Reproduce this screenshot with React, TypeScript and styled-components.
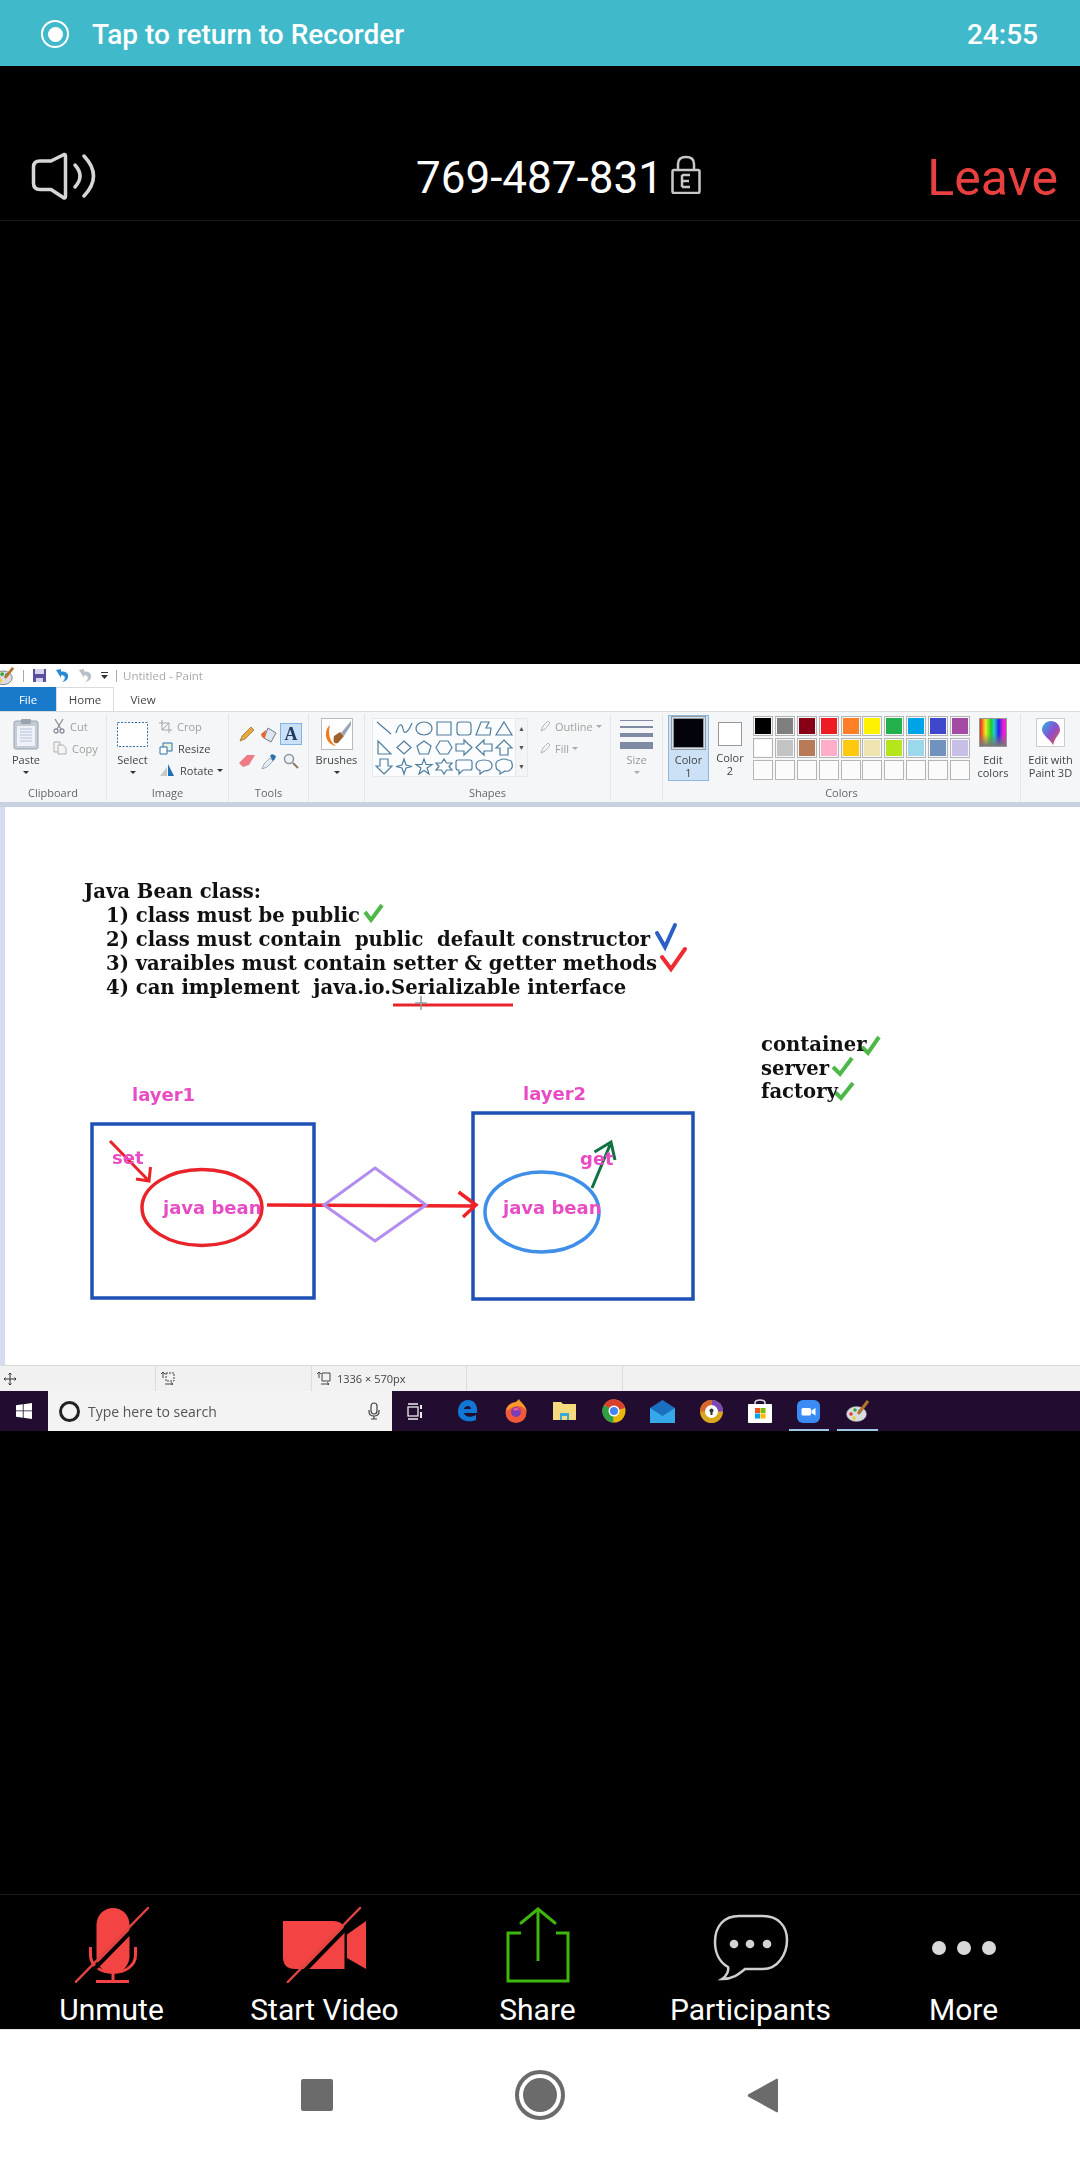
import React from "react";
import styled, { createGlobalStyle } from "styled-components";

const GlobalStyle = createGlobalStyle`
  html, body { margin: 0; padding: 0; background: #000; }
  body { font-family: Roboto, "Liberation Sans", sans-serif; }
  * { box-sizing: border-box; }
`;

const Page = styled.div`
  width: 1080px;
  height: 2160px;
  display: flex;
  flex-direction: column;
  background: #000;
  overflow: hidden;
`;

/* recorder strip */
const RecorderBar = styled.div`
  height: 66px;
  flex: none;
  display: flex;
  align-items: center;
  padding: 2px 42px 0 41px;
  background: #40b9cb;
  color: #fff;
  font-size: 28px;
  font-weight: 500;
`;

const RecDot = styled.span`
  width: 28px;
  height: 28px;
  border: 2px solid #fff;
  border-radius: 50%;
  display: flex;
  align-items: center;
  justify-content: center;
  margin-right: 23px;
  &::after {
    content: "";
    width: 15px;
    height: 15px;
    border-radius: 50%;
    background: #fff;
  }
`;

const RecTime = styled.span`
  margin-left: auto;
`;

/* meeting header */
const Header = styled.div`
  height: 155px;
  flex: none;
  display: flex;
  align-items: center;
  padding: 69px 22px 0 31px;
  border-bottom: 1px solid #1c1c1c;
`;

const SpeakerSvg = styled.svg`
  margin-bottom: 3px;
`;

const MeetingId = styled.div`
  margin-left: 319px;
  display: flex;
  align-items: center;
  color: #fff;
  font-size: 44px;
  font-weight: 400;
  gap: 8px;
`;

const LockSvg = styled.svg`
  margin-bottom: 6px;
`;

const Leave = styled.div`
  margin-left: auto;
  color: #e8403f;
  font-size: 50px;
  font-weight: 400;
`;

const BlackGap = styled.div<{ $h: number }>`
  height: ${(p) => p.$h}px;
  flex: none;
`;

/* shared screen */
const Share = styled.div`
  height: 767px;
  flex: none;
  display: flex;
  flex-direction: column;
  background: #fff;
  filter: blur(0.45px);
  font-family: "Open Sans", "Noto Sans", sans-serif;
  color: #444;
  font-size: 11px;
`;

const TitleBar = styled.div`
  height: 23px;
  flex: none;
  display: flex;
  align-items: center;
  gap: 8px;
  margin-left: -7px;
  color: #a8a8a8;
  font-size: 11.5px;
`;

const TitleSep = styled.span`
  width: 1px;
  height: 12px;
  background: #aaa;
`;

const TitleText = styled.span`
  margin-left: -2px;
`;

const Tabs = styled.div`
  height: 25px;
  flex: none;
  display: flex;
  align-items: stretch;
  border-bottom: 1px solid #dadbdc;
`;

const Tab = styled.div<{ $kind?: "file" | "active" }>`
  width: ${(p) => (p.$kind === "file" ? 56 : 58)}px;
  display: flex;
  align-items: center;
  justify-content: center;
  background: ${(p) => (p.$kind === "file" ? "#1979ca" : "#fff")};
  color: ${(p) => (p.$kind === "file" ? "#fff" : "#444")};
  border: ${(p) => (p.$kind === "active" ? "1px solid #dadbdc" : "none")};
  border-bottom: none;
  font-size: 11.5px;
`;

const Ribbon = styled.div`
  height: 90px;
  flex: none;
  display: flex;
  background: #f5f6f7;
`;

const Group = styled.div<{ $w: number; $last?: boolean }>`
  width: ${(p) => p.$w}px;
  flex: none;
  display: flex;
  flex-direction: column;
  border-right: ${(p) => (p.$last ? "none" : "1px solid #e4e5e7")};
  margin: 2px 0 1px;
`;

const GroupBody = styled.div<{ $pad?: number }>`
  flex: 1;
  display: flex;
  padding-left: ${(p) => p.$pad ?? 0}px;
  min-height: 0;
`;

const GroupLabel = styled.div`
  height: 16px;
  line-height: 16px;
  text-align: center;
  font-size: 11px;
  color: #666;
`;

const LargeTool = styled.div<{ $w?: number; $muted?: boolean }>`
  width: ${(p) => (p.$w ? `${p.$w}px` : "auto")};
  display: flex;
  flex-direction: column;
  align-items: center;
  padding-top: 4px;
  font-size: 11px;
  line-height: 13px;
  color: ${(p) => (p.$muted ? "#999" : "#444")};
`;

const LargeIcon = styled.div`
  height: 32px;
  margin-bottom: 3px;
  display: flex;
  align-items: center;
  justify-content: center;
`;

const Caret = styled.span<{ $muted?: boolean; $inline?: boolean }>`
  width: 0;
  height: 0;
  margin-top: ${(p) => (p.$inline ? 0 : 5)}px;
  margin-left: ${(p) => (p.$inline ? -2 : 0)}px;
  border-left: 3px solid transparent;
  border-right: 3px solid transparent;
  border-top: 3px solid ${(p) => (p.$muted ? "#aaa" : "#333")};
`;

const SmallColumn = styled.div<{ $left?: number }>`
  margin-left: ${(p) => p.$left ?? 0}px;
  padding-top: 1px;
  display: flex;
  flex-direction: column;
`;

const SmallTool = styled.div<{ $muted?: boolean }>`
  height: 22px;
  display: flex;
  align-items: center;
  gap: 5px;
  color: ${(p) => (p.$muted ? "#a0a0a0" : "#444")};
  font-size: 11px;
`;

const ToolsGrid = styled.div`
  display: grid;
  grid-template-columns: repeat(3, 22px);
  grid-template-rows: 22px 22px;
  row-gap: 5px;
  padding-top: 9px;
  justify-items: center;
  align-items: center;
`;

const ToolCell = styled.div<{ $on?: boolean }>`
  width: 22px;
  height: 22px;
  display: flex;
  align-items: center;
  justify-content: center;
  background: ${(p) => (p.$on ? "#c9e0f7" : "transparent")};
  border: ${(p) => (p.$on ? "1px solid #7fb2e5" : "none")};
  color: #1f3a5f;
  font-family: "Liberation Serif", serif;
  font-weight: 700;
  font-size: 18px;
`;

const BrushBox = styled.div`
  width: 32px;
  height: 32px;
  border: 1px solid #bbb;
  background: #fff;
`;

const ShapePanel = styled.div`
  margin-top: 4px;
  width: 156px;
  height: 59px;
  display: flex;
  background: #fbfcfe;
  border: 1px solid #e6e8ec;
`;

const ShapeGrid = styled.div`
  width: 142px;
  padding-left: 1px;
  display: grid;
  grid-template-columns: repeat(7, 20px);
  grid-template-rows: repeat(3, 19px);
`;

const ShapeScroll = styled.div`
  flex: 1;
  display: flex;
  flex-direction: column;
  align-items: center;
  justify-content: space-around;
  border-left: 1px solid #e6e8ec;
  background: #f3f4f6;
  color: #555;
  font-size: 7px;
  line-height: 1;
`;

const SizeLines = styled.div`
  width: 33px;
  display: flex;
  flex-direction: column;
  gap: 5px;
`;

const SizeLine = styled.span<{ $h: number }>`
  height: ${(p) => p.$h}px;
  background: #7f8ba3;
`;

const Color1Box = styled.div`
  width: 41px;
  height: 66px;
  margin-top: 1px;
  display: flex;
  flex-direction: column;
  align-items: center;
  padding-top: 2px;
  background: #cde1f6;
  border: 1px solid #8fb6dd;
  font-size: 11px;
  line-height: 13px;
  text-align: center;
`;

const Swatch = styled.span<{ $c: string; $w: number; $h: number }>`
  width: ${(p) => p.$w}px;
  height: ${(p) => p.$h}px;
  background: ${(p) => p.$c};
  border: 1px solid #999;
  outline: 1px solid ${(p) => (p.$c === "#fff" ? "transparent" : "#999")};
  outline-offset: 1px;
  margin-bottom: 5px;
`;

const Color2Tool = styled.div`
  width: 40px;
  margin-left: 1px;
  padding-top: 8px;
  display: flex;
  flex-direction: column;
  align-items: center;
  font-size: 11px;
  line-height: 13px;
  text-align: center;
`;

const Palette = styled.div`
  margin-left: 3px;
  margin-top: 2px;
  width: 218px;
  display: grid;
  grid-template-columns: repeat(10, 20px);
  grid-template-rows: repeat(3, 20px);
  gap: 2px 1.9px;
`;

const PaletteCell = styled.span<{ $c?: string }>`
  border: 1px solid #b5b5b5;
  background: ${(p) => (p.$c ? `linear-gradient(${p.$c}, ${p.$c}) center/16px 16px no-repeat` : "#fbfbfb")};
`;

const CenterTool = styled.div<{ $left?: number; $w: number }>`
  margin-left: ${(p) => p.$left ?? 0}px;
  width: ${(p) => p.$w}px;
  padding-top: 4px;
  display: flex;
  flex-direction: column;
  align-items: center;
  text-align: center;
  font-size: 11px;
  line-height: 13px;
  white-space: nowrap;
`;

const RainbowBox = styled.div`
  width: 28px;
  height: 29px;
  margin-bottom: 6px;
  border: 1px solid #999;
  background:
    linear-gradient(rgba(255, 255, 255, 0) 55%, #777),
    linear-gradient(90deg, #e22, #ee2 22%, #2c2 42%, #2cc 55%, #22e 72%, #e2c 90%);
`;

const Paint3dBox = styled.div`
  width: 29px;
  height: 29px;
  margin-bottom: 6px;
  border: 1px solid #ccc;
  background: #fff;
  display: flex;
  align-items: center;
  justify-content: center;
`;

const RibbonEdge = styled.div`
  height: 5px;
  flex: none;
  background: #c9d0e0;
`;

/* drawing area */
const CanvasWrap = styled.div`
  height: 558px;
  flex: none;
  border-left: 5px solid #d5dcef;
  background: #fff;
  position: relative;
`;

const CanvasDrawing = styled.svg`
  position: absolute;
  left: -5px;
  top: 0;
  width: 1080px;
  height: 558px;
`;

const Notes = styled.div<{ $x: number; $y: number; $lh: number }>`
  position: absolute;
  left: ${(p) => p.$x - 5}px;
  top: ${(p) => p.$y - 807}px;
  font-family: "DejaVu Serif", "Liberation Serif", serif;
  font-weight: 700;
  font-size: 19.6px;
  line-height: ${(p) => p.$lh}px;
  color: #111;
  white-space: pre;
`;

const NoteItem = styled.div`
  padding-left: 22px;
`;

const PinkLabel = styled.span<{ $x: number; $y: number }>`
  position: absolute;
  left: ${(p) => p.$x - 5}px;
  top: ${(p) => p.$y - 807}px;
  font-family: "DejaVu Sans", sans-serif;
  font-weight: 700;
  font-size: 18px;
  line-height: 20px;
  color: #e84cc4;
`;

const PaintStatus = styled.div`
  height: 26px;
  flex: none;
  display: flex;
  align-items: center;
  background: #f1f1f2;
  border-top: 1px solid #d8d8d8;
  font-size: 11px;
  color: #444;
`;

const StatusCell = styled.div<{ $w: number; $pad: number }>`
  width: ${(p) => p.$w}px;
  height: 100%;
  padding-left: ${(p) => p.$pad}px;
  display: flex;
  align-items: center;
  gap: 6px;
  border-right: 1px solid #dcdcdc;
`;

const Taskbar = styled.div`
  height: 40px;
  flex: none;
  display: flex;
  align-items: center;
  background: #220c30;
`;

const StartButton = styled.div`
  width: 48px;
  display: flex;
  justify-content: center;
`;

const SearchBox = styled.div`
  width: 344px;
  height: 100%;
  padding: 0 11px;
  display: flex;
  align-items: center;
  background: #f3f3f3;
  color: #555;
  font-size: 14px;
`;

const SearchRing = styled.span`
  width: 21px;
  height: 21px;
  border: 3px solid #222;
  border-radius: 50%;
  margin-right: 8px;
`;

const SearchMic = styled.span`
  margin-left: auto;
  margin-right: 1px;
  display: flex;
`;

const TaskIcons = styled.div`
  display: flex;
  height: 100%;
  margin-left: -1px;
`;

const TaskIcon = styled.div<{ $open?: boolean }>`
  width: 48.8px;
  height: 100%;
  display: flex;
  align-items: center;
  justify-content: center;
  position: relative;
  &::after {
    content: "";
    display: ${(p) => (p.$open ? "block" : "none")};
    position: absolute;
    left: 4px;
    right: 4px;
    bottom: 0;
    height: 2px;
    background: #9fc7e8;
  }
`;

const TaskViewCell = styled(TaskIcon)`
  width: 52px;
  padding-right: 4px;
`;

/* bottom controls */
const Toolbar = styled.div`
  height: 135px;
  flex: none;
  display: flex;
  padding: 12px 10px 0 5px;
  border-top: 1px solid #1c1c1c;
`;

const Control = styled.div`
  width: 213px;
  display: flex;
  flex-direction: column;
  align-items: center;
  color: #fff;
  font-size: 30px;
  line-height: 34px;
`;

const ControlIcon = styled.div`
  height: 76px;
  margin-bottom: 10px;
  display: flex;
  align-items: center;
  justify-content: center;
`;

const NavBar = styled.div`
  flex: 1;
  display: flex;
  align-items: center;
  justify-content: center;
  gap: 182px;
  padding-right: 1px;
  background: #fff;
  border-top: 1px solid #e8e8e8;
`;

const NavSquare = styled.span`
  width: 32px;
  height: 32px;
  border-radius: 2px;
  background: #6b6b6b;
`;

const NavCircle = styled.span`
  width: 50px;
  height: 50px;
  border-radius: 50%;
  border: 4px solid #6b6b6b;
  padding: 4px;
  &::after {
    content: "";
    display: block;
    width: 100%;
    height: 100%;
    border-radius: 50%;
    background: #6b6b6b;
  }
`;

const shapePaths = [
  "M3 3L17 15",
  "M2 14C5 4 8 4 9 10S14 14 18 4",
  "M10 3C15 3 18 6 18 9.500S15 16 10 16S2 13 2 9.500S5 3 10 3Z",
  "M3 3H17V16H3Z",
  "M6 3H14Q17 3 17 6V13Q17 16 14 16H6Q3 16 3 13V6Q3 3 6 3Z",
  "M2 16L7 3H15L12 9H17L16 16Z",
  "M10 3L18 16H2Z",
  "M4 3V16H17Z",
  "M10 3L17 9.500L10 16L3 9.500Z",
  "M10 3L17 8L14.500 16H5.500L3 8Z",
  "M6 3H14L18 9.500L14 16H6L2 9.500Z",
  "M2 6H10V2L18 9.500L10 17V13H2Z",
  "M18 6H10V2L2 9.500L10 17V13H18Z",
  "M10 2L18 10H14V17H6V10H2Z",
  "M10 17L18 9H14V2H6V9H2Z",
  "M10 2L12 8L18 9.500L12 11L10 17L8 11L2 9.500L8 8Z",
  "M10 2L12 7.500H18L13 11L15 17L10 13.500L5 17L7 11L2 7.500H8Z",
  "M10 2L12.500 6H18L15 9.500L18 13H12.500L10 17L7.500 13H2L5 9.500L2 6H7.500Z",
  "M4 3H16Q18 3 18 5V11Q18 13 16 13H9L5 17V13H4Q2 13 2 11V5Q2 3 4 3Z",
  "M10 3C15 3 18 5 18 8.500S15 14 10 14L6 17V13.500C3 12.500 2 10.500 2 8.500C2 5 5 3 10 3Z",
  "M6 3Q10 1 14 3Q18 3 18 7Q19 10 17 12Q15 15 11 14L6 17V14Q2 13 2 9Q1 4 6 3Z",
];

const topColors = ["#000", "#7f7f7f", "#880015", "#ed1c24", "#ff7f27", "#fff200", "#22b14c", "#00a2e8", "#3f48cc", "#a349a4"];
const midColors = ["#fff", "#c3c3c3", "#b97a57", "#ffaec9", "#ffc90e", "#efe4b0", "#b5e61d", "#99d9ea", "#7092be", "#c8bfe7"];

const PaintLogo = () => (
  <svg width="22" height="20" viewBox="0 0 24 22">
    <ellipse cx="11" cy="13" rx="10" ry="7.500" fill="#ddd" stroke="#777" />
    <circle cx="6" cy="12" r="2" fill="#e33" />
    <circle cx="10" cy="9" r="2" fill="#3a3" />
    <circle cx="15" cy="10" r="2" fill="#27c" />
    <circle cx="8" cy="16" r="2" fill="#ec3" />
    <path d="M13 13L22 2" stroke="#b5732c" strokeWidth="3" />
  </svg>
);

const SaveIcon = () => (
  <svg width="15" height="15" viewBox="0 0 15 15">
    <path d="M1 1H14V14H1Z" fill="#5c4f9c" />
    <path d="M3 1H12V6H3Z" fill="#d8d4ec" />
    <path d="M4 10H11V14H4Z" fill="#d8d4ec" />
  </svg>
);

const UndoIcon = ({ c }: { c: string }) => (
  <svg width="15" height="15" viewBox="0 0 15 15">
    <path d="M1 2L6 1V3.500C11 3 14 5.500 13 9.500C12.500 12 10 13.500 7 14C10 12 10.500 9.500 9 8C8 7 7 7 6 7.500V10Z" fill={c} />
  </svg>
);

const QuickCaret = () => (
  <svg width="7" height="8" viewBox="0 0 7 8" fill="#333">
    <path d="M0 0H7V1H0ZM0 3H7L3.500 7Z" />
  </svg>
);

const ClipboardIcon = () => (
  <svg width="26" height="32" viewBox="0 0 26 32">
    <rect x="1" y="3" width="24" height="28" rx="2" fill="#c5ccd6" stroke="#9aa3af" />
    <rect x="4" y="8" width="18" height="20" fill="#eef2f8" />
    <path d="M7 11H19M7 14H19M7 17H19M7 20H19M7 23H19" stroke="#b5c2d4" />
    <rect x="8" y="1" width="10" height="5" rx="1" fill="#9aa3af" />
  </svg>
);

const ScissorsIcon = () => (
  <svg width="12" height="16" viewBox="0 0 12 16" fill="none" stroke="#8a8f98" strokeWidth="1.300">
    <path d="M2 1L8 11M10 1L4 11" />
    <circle cx="3" cy="13" r="2" />
    <circle cx="9" cy="13" r="2" />
  </svg>
);

const CopyIcon = () => (
  <svg width="14" height="14" viewBox="0 0 14 14" fill="#f4f4f4" stroke="#b0b0b0">
    <path d="M1 1H7V11H1Z" />
    <path d="M5 4H10L13 7V13H5Z" />
  </svg>
);

const SelectIcon = () => (
  <svg width="31" height="25" viewBox="0 0 31 25">
    <rect x="0.500" y="0.500" width="30" height="24" fill="#fff" stroke="#3a6ea5" strokeDasharray="2 1.500" />
  </svg>
);

const CropIcon = () => (
  <svg width="13" height="13" viewBox="0 0 13 13" fill="none" stroke="#a4a4a4">
    <path d="M3 0V10H13M0 3H10V13M3 10L10 3" />
  </svg>
);

const ResizeIcon = () => (
  <svg width="14" height="13" viewBox="0 0 14 13" fill="none" stroke="#2a6fb0">
    <path d="M4 1H13V9H4Z" fill="#e6f3d8" />
    <path d="M1 5H8V12H1Z" fill="#fff" />
  </svg>
);

const RotateIcon = () => (
  <svg width="16" height="14" viewBox="0 0 16 14">
    <path d="M1 13L8 4V13Z" fill="#c8c8c8" />
    <path d="M9 1L15 13H9Z" fill="#1f6fb8" />
  </svg>
);

const PencilIcon = () => (
  <svg width="16" height="16" viewBox="0 0 16 16">
    <path d="M1 15L3 10L12 1L15 4L6 13Z" fill="#e7a93c" stroke="#8a6a2a" strokeWidth="0.700" />
  </svg>
);

const FillIcon = () => (
  <svg width="18" height="17" viewBox="0 0 18 17">
    <path d="M8 2L16 7L11 16L4 12Z" fill="#dfe6ee" stroke="#6f7d8c" />
    <path d="M1 8L6 4L5 12Q2 13 1 8Z" fill="#e8642c" />
  </svg>
);

const EraserIcon = () => (
  <svg width="18" height="14" viewBox="0 0 18 14">
    <path d="M1 9L9 1H17L11 11L5 13Z" fill="#ee7b86" />
  </svg>
);

const DropperIcon = () => (
  <svg width="16" height="17" viewBox="0 0 16 17">
    <path d="M1 16L3 11L9 5L12 8L6 14Z" fill="#e4edf4" stroke="#7d8a96" strokeWidth="0.700" />
    <path d="M9 3L11 1L15 3L14 6L12 8Z" fill="#2a6fb0" />
  </svg>
);

const LensIcon = () => (
  <svg width="16" height="16" viewBox="0 0 16 16" fill="none">
    <circle cx="6" cy="6" r="4.500" stroke="#8a94a0" strokeWidth="1.500" fill="#eef3f8" />
    <path d="M10 10L15 15" stroke="#8a7a60" strokeWidth="2" />
  </svg>
);

const BrushIcon = () => (
  <BrushBox>
    <svg width="30" height="30" viewBox="0 0 30 30">
      <path d="M8 6C1 12 3 25 14 27C7 22 6 14 8 6Z" fill="#f07a1e" />
      <path d="M12 17L18 13L22 17L16 24Q10 26 12 17Z" fill="#a0622c" />
      <path d="M19 14L29 2V6L22 17Z" fill="#9aa5b5" />
    </svg>
  </BrushBox>
);

const OutlineIcon = () => (
  <svg width="10" height="12" viewBox="0 0 10 12" fill="none" stroke="#b5b5b5">
    <path d="M1 11L3 6L8 1L10 3L5 9Z" />
  </svg>
);

const Paint3dIcon = () => (
  <svg width="18" height="24" viewBox="0 0 18 24">
    <defs>
      <linearGradient id="p3d" x1="0" y1="0" x2="1" y2="1">
        <stop offset="0" stopColor="#25b5e8" />
        <stop offset="0.500" stopColor="#8a4fd0" />
        <stop offset="1" stopColor="#f2503a" />
      </linearGradient>
    </defs>
    <path d="M9 0C14 0 18 4 18 9C18 13 13 16 11 24C8 18 0 14 0 9C0 4 4 0 9 0Z" fill="url(#p3d)" />
  </svg>
);

const MoveIcon = () => (
  <svg width="12" height="12" viewBox="0 0 12 12" fill="none" stroke="#333">
    <path d="M6 0V12M0 6H12M4.500 1.500L6 0L7.500 1.500M4.500 10.500L6 12L7.500 10.500M1.500 4.500L0 6L1.500 7.500M10.500 4.500L12 6L10.500 7.500" />
  </svg>
);

const SelectionSize = () => (
  <svg width="14" height="13" viewBox="0 0 14 13" fill="none" stroke="#444">
    <path d="M2 0V6M0 2L2 0L4 2" />
    <path d="M5 1H13V9H5Z" strokeDasharray="2 1" />
    <path d="M4 12H12M10 10.500L12 12L10 13.500" />
  </svg>
);

const ImageSize = () => (
  <svg width="14" height="13" viewBox="0 0 14 13" fill="none" stroke="#444">
    <path d="M2 0V6M0 2L2 0L4 2" />
    <path d="M5 1H13V9H5Z" />
    <path d="M4 12H12M10 10.500L12 12L10 13.500" />
  </svg>
);

const WindowsLogo = () => (
  <svg width="16" height="16" viewBox="0 0 16 16" fill="#fff">
    <path d="M0 2.300L6.800 1.300V7.500H0ZM7.600 1.200L16 0V7.500H7.600ZM0 8.300H6.800V14.700L0 13.700ZM7.600 8.300H16V16L7.600 14.800Z" />
  </svg>
);

const SmallMic = () => (
  <svg width="12" height="18" viewBox="0 0 12 18" fill="none" stroke="#444" strokeWidth="1.200">
    <rect x="3" y="1" width="6" height="11" rx="3" />
    <path d="M1 8V9.500Q1 14 6 14Q11 14 11 9.500V8M6 14V17M3 17H9" />
  </svg>
);

const TaskView = () => (
  <svg width="16" height="17" viewBox="0 0 16 17" fill="none" stroke="#eee" strokeWidth="1.300">
    <path d="M1 1H11M1 16H11" />
    <rect x="1" y="4" width="10" height="9" />
    <path d="M14 2V6M14 9V15" strokeWidth="2" />
  </svg>
);

const EdgeIcon = () => (
  <svg width="21" height="22" viewBox="0 0 21 22">
    <path d="M1 12C1 4 6 0 11 0C17 0 21 5 20 13H7C8 17 14 18 19 15V20C12 23 1 21 1 12ZM7 9H14C14 5 8 5 7 9Z" fill="#0f78d4" />
  </svg>
);

const FirefoxIcon = () => (
  <svg width="24" height="24" viewBox="0 0 24 24">
    <circle cx="12" cy="13.500" r="10.500" fill="#f2583a" />
    <path d="M2 12C3 6 8 4 12 3L15 0C16 3 22 6 23 13C20 7 14 6 9 8Z" fill="#fb9a2c" />
    <circle cx="12" cy="13" r="5" fill="#7a3fb5" />
    <path d="M9 10Q14 7 16 12Q13 10 11 12Z" fill="#f59" />
  </svg>
);

const FolderIcon = () => (
  <svg width="23" height="20" viewBox="0 0 23 20">
    <path d="M0 1H8L10 3H23V19H0Z" fill="#f6da7e" />
    <path d="M7 12H16V19H14V15H9V19H7Z" fill="#3ba8d8" />
  </svg>
);

const ChromeIcon = () => (
  <svg width="24" height="24" viewBox="0 0 24 24">
    <circle cx="12" cy="12" r="11.500" fill="#e8b80c" />
    <path d="M12 12L2 6A11.500 11.500 0 0 1 23 9Z" fill="#d9402f" />
    <path d="M12 12L2 6A11.500 11.500 0 0 0 11 23.500Z" fill="#2f9e44" />
    <circle cx="12" cy="12" r="5.500" fill="#fff" />
    <circle cx="12" cy="12" r="4" fill="#4285f4" />
  </svg>
);

const MailIcon = () => (
  <svg width="25" height="23" viewBox="0 0 25 23">
    <path d="M0 8L12.500 0L25 8V23H0Z" fill="#1b6fc0" />
    <path d="M0 8L12.500 16L25 8V23H0Z" fill="#35a8ea" />
  </svg>
);

const AvastIcon = () => (
  <svg width="23" height="23" viewBox="0 0 23 23">
    <circle cx="11.500" cy="11.500" r="11.500" fill="#d9a81e" />
    <path d="M11.500 0A11.500 11.500 0 0 1 23 11.500L11.500 11.500Z" fill="#7a46b8" />
    <path d="M0 11.500A11.500 11.500 0 0 1 11.500 0V11.500Z" fill="#d9662a" />
    <circle cx="11.500" cy="11.500" r="6.500" fill="#fff" />
    <circle cx="11.500" cy="10.500" r="2" fill="#333" />
    <path d="M10.500 11H12.500V15H10.500Z" fill="#333" />
  </svg>
);

const StoreIcon = () => (
  <svg width="24" height="24" viewBox="0 0 24 24">
    <path d="M7 6V4Q7 1 12 1Q17 1 17 4V6" fill="none" stroke="#ddd" strokeWidth="1.500" />
    <rect x="0" y="5" width="24" height="19" rx="1" fill="#fff" />
    <rect x="7" y="9" width="5" height="5" fill="#f25022" />
    <rect x="12.500" y="9" width="5" height="5" fill="#7fba00" />
    <rect x="7" y="14.500" width="5" height="5" fill="#00a4ef" />
    <rect x="12.500" y="14.500" width="5" height="5" fill="#ffb900" />
  </svg>
);

const ZoomIcon = () => (
  <svg width="23" height="23" viewBox="0 0 23 23">
    <rect width="23" height="23" rx="6" fill="#3a8cf4" />
    <rect x="4.500" y="8" width="9.500" height="7.500" rx="1.500" fill="#fff" />
    <path d="M14.500 10.500L18.500 8V15.500L14.500 13Z" fill="#fff" />
  </svg>
);

const PaintTaskIcon = () => (
  <svg width="24" height="24" viewBox="0 0 24 24">
    <ellipse cx="10.500" cy="15" rx="10" ry="7.500" fill="#d8dde0" stroke="#999" strokeWidth="0.500" />
    <circle cx="5" cy="15" r="1.800" fill="#e33" />
    <circle cx="9" cy="11" r="1.800" fill="#3a3" />
    <circle cx="14" cy="12" r="1.800" fill="#27c" />
    <circle cx="8" cy="19" r="1.800" fill="#ec3" />
    <path d="M12 15L22 2" stroke="#b5732c" strokeWidth="3" />
  </svg>
);

const SpeakerIcon = () => (
  <SpeakerSvg width="66" height="49" viewBox="0 0 66 49" fill="none" stroke="#d6d6d6" strokeWidth="3.500" strokeLinejoin="round" strokeLinecap="round">
    <path d="M9 9H20L33 2.500Q34.500 2 34.500 4V44Q34.500 46.500 33 46L20 37.500H9Q2.500 37.500 2.500 31V15Q2.500 9 9 9Z" />
    <path d="M44 13Q54 24 44 35" />
    <path d="M53 4Q72 24 53 44" />
  </SpeakerSvg>
);

const LockIcon = () => (
  <LockSvg width="30" height="39" viewBox="0 0 30 39" fill="none" stroke="#c8c8c8">
    <path d="M7 15V9Q7 2 15 2Q23 2 23 9V15" strokeWidth="2.500" />
    <rect x="1.500" y="15" width="27" height="23" rx="1.500" strokeWidth="2.500" />
    <path d="M11 20H19M11 26H18M11 32H19M11 20V32" strokeWidth="2.500" />
  </LockSvg>
);

const MicOffIcon = () => (
  <svg width="74" height="76" viewBox="0 0 74 76" fill="none">
    <rect x="21.500" y="1" width="33" height="65" rx="16.500" fill="#f44343" />
    <path d="M15.500 40V48C15.500 59 26 65.500 38 65.500S60.500 59 60.500 48V40" stroke="#f44343" strokeWidth="3" />
    <path d="M38 66V74M21 74.500H54" stroke="#f44343" strokeWidth="3" />
    <path d="M76 4L3.800 78" stroke="#000" strokeWidth="4" />
    <path d="M73 1L0.800 75" stroke="#e04542" strokeWidth="2.500" strokeLinecap="round" />
  </svg>
);

const VideoOffIcon = () => (
  <svg width="84" height="76" viewBox="0 0 84 76" fill="none">
    <path d="M0 14H50Q61.500 14 61.500 25V62H12Q0 62 0 50Z" fill="#f44343" />
    <path d="M64 27.500L83 14V62L64 51Z" fill="#f44343" />
    <path d="M80 4L7.800 78" stroke="#000" strokeWidth="4" />
    <path d="M77 1L4.800 75" stroke="#e04542" strokeWidth="2.500" strokeLinecap="round" />
  </svg>
);

const ShareIcon = () => (
  <svg width="64" height="76" viewBox="0 0 64 76" fill="none" stroke="#3fb50f" strokeWidth="3">
    <path d="M15 26H2V74H62V26H50" />
    <path d="M32 2V54" />
    <path d="M15 16L32 2L49 16" strokeLinecap="round" />
  </svg>
);

const BubbleIcon = () => (
  <svg width="76" height="76" viewBox="0 -7 76 76" fill="none">
    <path
      d="M26 2H50C65 2 74 12 74 26S65 55 50 55H32C27 59 21 65 9 65C14 62 16 56 15 53C6 48 2 38 2 28C2 12 11 2 26 2Z"
      stroke="#cfcfcf"
      strokeWidth="2.500"
    />
    <circle cx="21" cy="30" r="4.300" fill="#d4d4d4" />
    <circle cx="37" cy="30" r="4.300" fill="#d4d4d4" />
    <circle cx="54" cy="30" r="4.300" fill="#d4d4d4" />
  </svg>
);

const MoreIcon = () => (
  <svg width="66" height="76" viewBox="0 0 66 76" fill="#d8d8d8">
    <circle cx="8" cy="41" r="7" />
    <circle cx="33" cy="41" r="7" />
    <circle cx="58" cy="41" r="7" />
  </svg>
);

const BackIcon = () => (
  <svg width="32" height="37" viewBox="0 0 32 37">
    <path d="M30 1.500L31 2.500V34.500L30 35.500L1 19.500Q0.500 18.500 1 17.500Z" fill="#6b6b6b" />
  </svg>
);

const Diagram = () => (
  <CanvasDrawing viewBox="0 807 1080 558" fill="none">
    {/* notes marks */}
    <path d="M393 1005H513" stroke="#e8242a" strokeWidth="3" />
    <path d="M421 996V1010M415 1003H427" stroke="#999" strokeWidth="1.500" />
    <path d="M365 912L371 920L382 905" stroke="#4cb848" strokeWidth="4" />
    <path d="M657 933L665 947L675 925" stroke="#2c5fc4" strokeWidth="4" strokeLinecap="round" />
    <path d="M662 957L671 969L685 949" stroke="#ee2b33" strokeWidth="4" strokeLinecap="round" />
    <path d="M862 1047L868 1053L879 1037" stroke="#4cb848" strokeWidth="4" />
    <path d="M833 1067L840 1074L852 1058" stroke="#4cb848" strokeWidth="4" />
    <path d="M835 1092L841 1098L853 1083" stroke="#4cb848" strokeWidth="4" />

    {/* layer 1 */}
    <rect x="92" y="1124" width="222" height="174" stroke="#1f50b5" strokeWidth="3.500" />
    <ellipse cx="202" cy="1207.500" rx="60" ry="38" stroke="#e8242a" strokeWidth="3.500" />
    <path d="M110 1141L148 1180M150.500 1167L149 1181L136 1179" stroke="#e8242a" strokeWidth="3" />

    {/* layer 2 */}
    <rect x="473" y="1113" width="220" height="186" stroke="#1f50b5" strokeWidth="3.500" />
    <ellipse cx="542" cy="1212" rx="57" ry="40" stroke="#3f8fe8" strokeWidth="3.500" />
    <path d="M592 1188L610 1145M594.500 1152L611 1142L615 1160" stroke="#0f7040" strokeWidth="3" />

    {/* link */}
    <path d="M267 1205L474.500 1206M458.600 1192L476 1205L463 1217" stroke="#ee2228" strokeWidth="3.500" />
    <path d="M375 1168L426 1205L375 1241L324 1205Z" stroke="#b38cf0" strokeWidth="3" />
  </CanvasDrawing>
);

const bottomControls = [
  { label: "Unmute", icon: <MicOffIcon /> },
  { label: "Start Video", icon: <VideoOffIcon /> },
  { label: "Share", icon: <ShareIcon /> },
  { label: "Participants", icon: <BubbleIcon /> },
  { label: "More", icon: <MoreIcon /> },
];

const taskIcons = [
  { key: "edge", icon: <EdgeIcon /> },
  { key: "firefox", icon: <FirefoxIcon /> },
  { key: "folder", icon: <FolderIcon /> },
  { key: "chrome", icon: <ChromeIcon /> },
  { key: "mail", icon: <MailIcon /> },
  { key: "avast", icon: <AvastIcon /> },
  { key: "store", icon: <StoreIcon /> },
  { key: "zoom", icon: <ZoomIcon />, open: true },
  { key: "paint", icon: <PaintTaskIcon />, open: true },
];

const App: React.FC = () => {
  return (
    <Page>
      <GlobalStyle />
      <RecorderBar>
        <RecDot />
        Tap to return to Recorder
        <RecTime>24:55</RecTime>
      </RecorderBar>

      <Header>
        <SpeakerIcon />
        <MeetingId>
          769-487-831
          <LockIcon />
        </MeetingId>
        <Leave>Leave</Leave>
      </Header>

      <BlackGap $h={443} />

      <Share>
        <TitleBar>
          <PaintLogo />
          <TitleSep />
          <SaveIcon />
          <UndoIcon c="#2a8ad4" />
          <UndoIcon c="#b8c0c8" />
          <QuickCaret />
          <TitleSep />
          <TitleText>Untitled - Paint</TitleText>
        </TitleBar>
        <Tabs>
          <Tab $kind="file">File</Tab>
          <Tab $kind="active">Home</Tab>
          <Tab>View</Tab>
        </Tabs>
        <Ribbon>
          <Group $w={107}>
            <GroupBody $pad={13}>
              <LargeTool $w={26}>
                <LargeIcon><ClipboardIcon /></LargeIcon>
                Paste
                <Caret />
              </LargeTool>
              <SmallColumn $left={14}>
                <SmallTool $muted><ScissorsIcon />Cut</SmallTool>
                <SmallTool $muted><CopyIcon />Copy</SmallTool>
              </SmallColumn>
            </GroupBody>
            <GroupLabel>Clipboard</GroupLabel>
          </Group>
          <Group $w={122}>
            <GroupBody $pad={10}>
              <LargeTool $w={31}>
                <LargeIcon><SelectIcon /></LargeIcon>
                Select
                <Caret />
              </LargeTool>
              <SmallColumn $left={11}>
                <SmallTool $muted><CropIcon />Crop</SmallTool>
                <SmallTool><ResizeIcon />Resize</SmallTool>
                <SmallTool><RotateIcon />Rotate<Caret $inline /></SmallTool>
              </SmallColumn>
            </GroupBody>
            <GroupLabel>Image</GroupLabel>
          </Group>
          <Group $w={80}>
            <GroupBody $pad={7}>
              <ToolsGrid>
                <ToolCell><PencilIcon /></ToolCell>
                <ToolCell><FillIcon /></ToolCell>
                <ToolCell $on>A</ToolCell>
                <ToolCell><EraserIcon /></ToolCell>
                <ToolCell><DropperIcon /></ToolCell>
                <ToolCell><LensIcon /></ToolCell>
              </ToolsGrid>
            </GroupBody>
            <GroupLabel>Tools</GroupLabel>
          </Group>
          <Group $w={56}>
            <GroupBody>
              <LargeTool $w={56}>
                <LargeIcon><BrushIcon /></LargeIcon>
                Brushes
                <Caret />
              </LargeTool>
            </GroupBody>
            <GroupLabel>&nbsp;</GroupLabel>
          </Group>
          <Group $w={246}>
            <GroupBody $pad={7}>
              <ShapePanel>
                <ShapeGrid>
                  {shapePaths.map((d) => (
                    <svg key={d} width="20" height="19" viewBox="0 0 20 19" fill="none" stroke="#4f7d9c" strokeWidth="1.200">
                      <path d={d} />
                    </svg>
                  ))}
                </ShapeGrid>
                <ShapeScroll>
                  <span>▲</span>
                  <span>▼</span>
                  <span>▼</span>
                </ShapeScroll>
              </ShapePanel>
              <SmallColumn $left={12}>
                <SmallTool $muted><OutlineIcon />Outline<Caret $inline $muted /></SmallTool>
                <SmallTool $muted><OutlineIcon />Fill<Caret $inline $muted /></SmallTool>
              </SmallColumn>
            </GroupBody>
            <GroupLabel>Shapes</GroupLabel>
          </Group>
          <Group $w={52}>
            <GroupBody>
              <LargeTool $w={52} $muted>
                <LargeIcon>
                  <SizeLines>
                    <SizeLine $h={1} />
                    <SizeLine $h={2} />
                    <SizeLine $h={4} />
                    <SizeLine $h={7} />
                  </SizeLines>
                </LargeIcon>
                Size
                <Caret $muted />
              </LargeTool>
            </GroupBody>
            <GroupLabel>&nbsp;</GroupLabel>
          </Group>
          <Group $w={358}>
            <GroupBody $pad={5}>
              <Color1Box>
                <Swatch $c="#03030b" $w={31} $h={30} />
                <span>Color<br />1</span>
              </Color1Box>
              <Color2Tool>
                <Swatch $c="#fff" $w={24} $h={24} />
                <span>Color<br />2</span>
              </Color2Tool>
              <Palette>
                {topColors.map((c) => <PaletteCell key={c} $c={c} />)}
                {midColors.map((c) => <PaletteCell key={c} $c={c} />)}
                {Array.from({ length: 10 }, (_, i) => <PaletteCell key={i} />)}
              </Palette>
              <CenterTool $left={1} $w={42}>
                <RainbowBox />
                <span>Edit<br />colors</span>
              </CenterTool>
            </GroupBody>
            <GroupLabel>Colors</GroupLabel>
          </Group>
          <Group $w={59} $last>
            <GroupBody>
              <CenterTool $w={59}>
                <Paint3dBox><Paint3dIcon /></Paint3dBox>
                <span>Edit with<br />Paint 3D</span>
              </CenterTool>
            </GroupBody>
            <GroupLabel>&nbsp;</GroupLabel>
          </Group>
        </Ribbon>
        <RibbonEdge />

        <CanvasWrap>
          <Diagram />
          <Notes $x={84} $y={880} $lh={24}>
            Java Bean class:
            <NoteItem>1) class must be public</NoteItem>
            <NoteItem>2) class must contain  public  default constructor</NoteItem>
            <NoteItem>3) varaibles must contain setter &amp; getter methods</NoteItem>
            <NoteItem>4) can implement  java.io.Serializable interface</NoteItem>
          </Notes>
          <Notes $x={761} $y={1033} $lh={23.5}>
            container
            <br />
            server
            <br />
            factory
          </Notes>
          <PinkLabel $x={132} $y={1085}>layer1</PinkLabel>
          <PinkLabel $x={523} $y={1084}>layer2</PinkLabel>
          <PinkLabel $x={112} $y={1148}>set</PinkLabel>
          <PinkLabel $x={163} $y={1198}>java bean</PinkLabel>
          <PinkLabel $x={580} $y={1149}>get</PinkLabel>
          <PinkLabel $x={503} $y={1198}>java bean</PinkLabel>
        </CanvasWrap>

        <PaintStatus>
          <StatusCell $w={156} $pad={4}><MoveIcon /></StatusCell>
          <StatusCell $w={156} $pad={5}><SelectionSize /></StatusCell>
          <StatusCell $w={155} $pad={5}><ImageSize />1336 × 570px</StatusCell>
          <StatusCell $w={156} $pad={0} />
        </PaintStatus>

        <Taskbar>
          <StartButton><WindowsLogo /></StartButton>
          <SearchBox>
            <SearchRing />
            Type here to search
            <SearchMic><SmallMic /></SearchMic>
          </SearchBox>
          <TaskIcons>
            <TaskViewCell><TaskView /></TaskViewCell>
            {taskIcons.map((t) => (
              <TaskIcon key={t.key} $open={t.open}>{t.icon}</TaskIcon>
            ))}
          </TaskIcons>
        </Taskbar>
      </Share>

      <BlackGap $h={463} />

      <Toolbar>
        {bottomControls.map((c) => (
          <Control key={c.label}>
            <ControlIcon>{c.icon}</ControlIcon>
            {c.label}
          </Control>
        ))}
      </Toolbar>

      <NavBar>
        <NavSquare />
        <NavCircle />
        <BackIcon />
      </NavBar>
    </Page>
  );
};

export default App;
